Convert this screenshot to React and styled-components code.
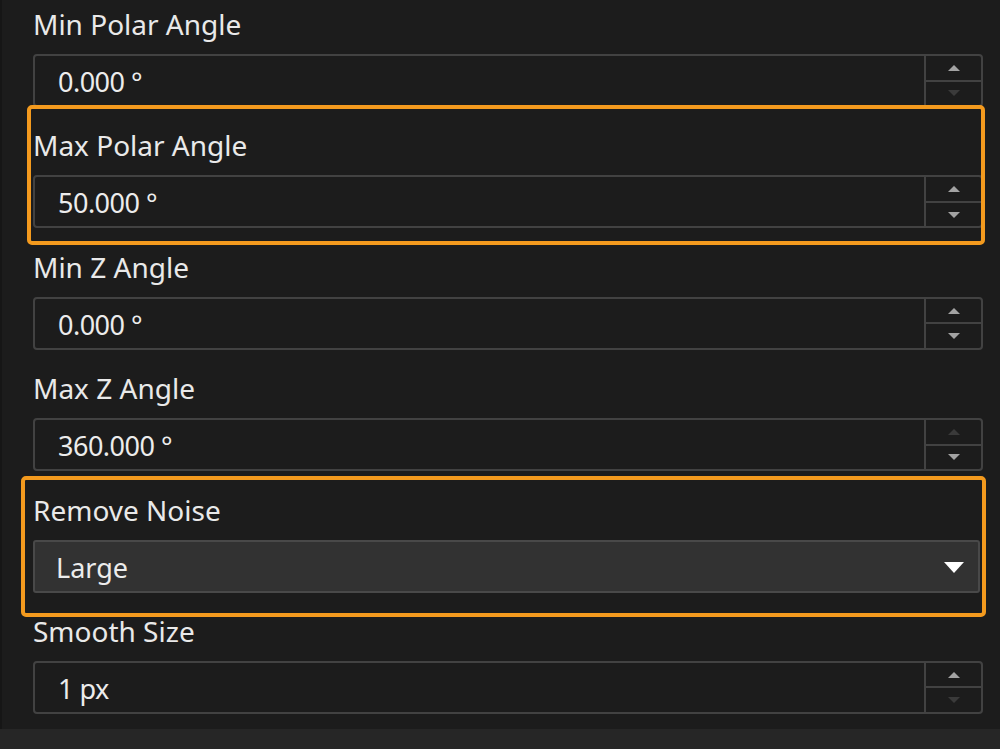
import React from 'react';
import styled, { createGlobalStyle } from 'styled-components';

const GlobalStyle = createGlobalStyle`
  html, body {
    margin: 0;
    padding: 0;
    background: #262626;
  }
  body {
    font-family: 'Noto Sans', 'Open Sans', sans-serif;
  }
`;

const Page = styled.div`
  position: relative;
  width: 1000px;
  height: 749px;
  background: #262626;
  overflow: hidden;
`;

const Panel = styled.div`
  display: flex;
  flex-direction: column;
  height: 729px;
  box-sizing: border-box;
  padding: 6px 17px 0 33px;
  background: #1c1c1c;
  border-left: 2px solid #161616;
`;

const Field = styled.div`
  display: flex;
  flex-direction: column;
  margin-bottom: 20.4px;
`;

const Label = styled.div`
  height: 36px;
  line-height: 36px;
  margin-bottom: 12px;
  margin-left: -2px;
  font-size: 28px;
  color: #e9e9e9;
  white-space: nowrap;
`;

const SpinBox = styled.div`
  display: flex;
  height: 53px;
  box-sizing: border-box;
  border: 2px solid #424242;
  border-radius: 4px;
  margin-left: -2px;
  background: #1c1c1c;
`;

const Value = styled.div`
  flex: 1;
  display: flex;
  align-items: center;
  padding: 2px 0 0 23px;
  font-size: 27px;
  color: #ececec;
  letter-spacing: -0.5px;
`;

const Steppers = styled.div`
  display: flex;
  flex-direction: column;
  width: 55px;
  border-left: 2px solid #424242;
`;

const StepButton = styled.div`
  flex: 1;
  display: flex;
  align-items: center;
  justify-content: center;
  & + & {
    border-top: 2px solid #424242;
  }
`;

const Tri = styled.span`
  width: 0;
  height: 0;
  border-left: 6px solid transparent;
  border-right: 6px solid transparent;
  ${p => (p.$down ? 'border-top' : 'border-bottom')}: 6px solid
    ${p => (p.$off ? '#3a3a3a' : '#a3a3a3')};
`;

const Dropdown = styled.div`
  display: flex;
  align-items: center;
  justify-content: space-between;
  height: 53px;
  box-sizing: border-box;
  margin-left: -2px;
  margin-right: 3px;
  padding: 2px 14px 0 21px;
  background: #323232;
  border: 2px solid #494949;
  border-radius: 3px;
  font-size: 27px;
  color: #ececec;
`;

const Caret = styled.span`
  width: 0;
  height: 0;
  border-left: 10px solid transparent;
  border-right: 10px solid transparent;
  border-top: 11px solid #ffffff;
`;

const Highlight = styled.div`
  position: absolute;
  left: ${p => p.$x}px;
  top: ${p => p.$y}px;
  width: ${p => p.$w}px;
  height: ${p => p.$h}px;
  box-sizing: border-box;
  border: 4px solid #f39a1e;
  border-radius: 5px;
  pointer-events: none;
`;

const fields = [
  { label: 'Min Polar Angle', value: '0.000 °', upOff: false, downOff: true },
  { label: 'Max Polar Angle', value: '50.000 °' },
  { label: 'Min Z Angle', value: '0.000 °' },
  { label: 'Max Z Angle', value: '360.000 °', upOff: true, downOff: false },
  { label: 'Remove Noise', value: 'Large', select: true },
  { label: 'Smooth Size', value: '1 px', upOff: false, downOff: true },
];

const NumberField = ({ label, value, upOff, downOff }) => (
  <Field>
    <Label>{label}</Label>
    <SpinBox>
      <Value>{value}</Value>
      <Steppers>
        <StepButton>
          <Tri $off={upOff} />
        </StepButton>
        <StepButton>
          <Tri $down $off={downOff} />
        </StepButton>
      </Steppers>
    </SpinBox>
  </Field>
);

const SelectField = ({ label, value }) => (
  <Field>
    <Label>{label}</Label>
    <Dropdown>
      <span>{value}</span>
      <Caret />
    </Dropdown>
  </Field>
);

export default function App() {
  return (
    <Page>
      <GlobalStyle />
      <Panel>
        {fields.map(f =>
          f.select ? (
            <SelectField key={f.label} label={f.label} value={f.value} />
          ) : (
            <NumberField key={f.label} {...f} />
          ),
        )}
      </Panel>
      <Highlight $x={27} $y={105} $w={958} $h={140} />
      <Highlight $x={21} $y={476} $w={965} $h={141} />
    </Page>
  );
}
